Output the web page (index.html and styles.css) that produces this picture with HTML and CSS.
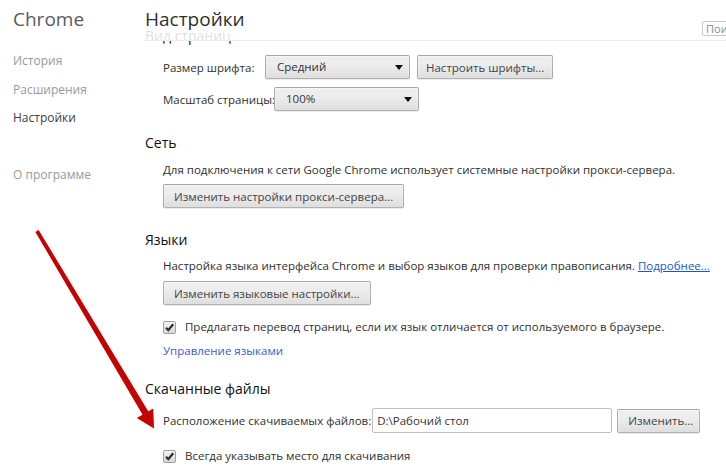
FILE: index.html
```html
<!DOCTYPE html>
<html lang="ru">
<head>
    <meta charset="UTF-8">
    <meta name="viewport" content="width=device-width, initial-scale=1.0">
    <title>Настройки</title>
    <link rel="stylesheet" href="styles.css">
</head>
<body>
    <div class="page">
        <!-- Боковое меню -->
        <nav class="sidebar">
            <div class="brand">Chrome</div>
            <ul class="nav">
                <li>История</li>
                <li>Расширения</li>
                <li class="active">Настройки</li>
                <li class="about">О программе</li>
            </ul>
        </nav>

        <main class="main">
            <header class="topbar">
                <h1>Настройки</h1>
                <input class="search" type="text" placeholder="Поиск настроек">
            </header>

            <!-- Вид страниц -->
            <section class="block block-first">
                <h3>Вид страниц</h3>
                <div class="row row-title">
                    <span class="label label-font">Размер шрифта:</span>
                    <div class="select">Средний<span class="caret"></span></div>
                    <button class="btn btn-fonts">Настроить шрифты...</button>
                </div>
                <div class="row row-next">
                    <span class="label label-zoom">Масштаб страницы:</span>
                    <div class="select">100%<span class="caret"></span></div>
                </div>
            </section>

            <!-- Сеть -->
            <section class="block">
                <h3>Сеть</h3>
                <p class="text">Для подключения к сети Google Chrome использует системные настройки прокси-сервера.</p>
                <div class="row row-btn">
                    <button class="btn">Изменить настройки прокси-сервера...</button>
                </div>
            </section>

            <!-- Языки -->
            <section class="block">
                <h3>Языки</h3>
                <p class="text text-lang">Настройка языка интерфейса Chrome и выбор языков для проверки правописания. <a href="#" class="more">Подробнее...</a></p>
                <div class="row row-btn row-btn-lang">
                    <button class="btn">Изменить языковые настройки...</button>
                </div>
                <label class="check check-translate">
                    <span class="box"><svg viewBox="0 0 13 13" width="13" height="13"><path d="M3 6.8 L5.3 9.2 L10.2 3.2" fill="none" stroke="#2c2c2c" stroke-width="2.2"/></svg></span>
                    Предлагать перевод страниц, если их язык отличается от используемого в браузере.
                </label>
                <p class="text text-link"><a href="#" class="plain-link">Управление языками</a></p>
            </section>

            <!-- Скачанные файлы -->
            <section class="block block-last">
                <h3>Скачанные файлы</h3>
                <div class="row row-path">
                    <span class="label">Расположение скачиваемых файлов:</span>
                    <input class="path" type="text" value="D:\Рабочий стол">
                    <button class="btn btn-change">Изменить...</button>
                </div>
                <label class="check check-ask">
                    <span class="box"><svg viewBox="0 0 13 13" width="13" height="13"><path d="M3 6.8 L5.3 9.2 L10.2 3.2" fill="none" stroke="#2c2c2c" stroke-width="2.2"/></svg></span>
                    Всегда указывать место для скачивания
                </label>
            </section>
        </main>
    </div>

    <!-- Красная стрелка поверх страницы -->
    <svg class="arrow" width="726" height="476" viewBox="0 0 726 476">
        <polygon points="38.6,230 35.4,232 143.2,415.8 148.8,412.2" fill="#c40000"/>
        <polygon points="136.8,418 153.2,408.4 154,428.5" fill="#c40000"/>
    </svg>
</body>
</html>
```

FILE: styles.css
```css
/* Reset */
* {
    box-sizing: border-box;
}

html, body {
    margin: 0;
    padding: 0;
    height: 100%;
    overflow: hidden;
}

body {
    font-family: "Open Sans", "Noto Sans", sans-serif;
    font-size: 11.5px;
    color: #303030;
    background: #fff;
}

.page {
    display: flex;
    width: 726px;
    height: 476px;
    overflow: hidden;
}

/* Боковое меню */
.sidebar {
    width: 145px;
    flex: 0 0 145px;
    padding-left: 13px;
}

.brand {
    margin-top: 7px;
    font-size: 19px;
    line-height: 24px;
    color: #5a5a5a;
}

.nav {
    list-style: none;
    margin: 21px 0 0;
    padding: 0;
}

.nav li {
    height: 28.5px;
    line-height: 18px;
    font-size: 12px;
    color: #999;
}

.nav li.active {
    color: #404040;
}

.nav li.about {
    margin-top: 28.5px;
}

/* Основная часть */
.main {
    flex: 0 0 581px;
    width: 581px;
    min-width: 0;
    position: relative;
    padding-top: 27px;
}

.topbar {
    position: absolute;
    top: 0;
    left: 0;
    width: 581px;
    height: 41px;
    background: rgba(255, 255, 255, 0.86);
    border-bottom: 1px solid #ececec;
    overflow: hidden;
    z-index: 2;
}

.topbar h1 {
    margin: 0;
    padding-top: 7px;
    font-size: 19px;
    line-height: 24px;
    font-weight: normal;
    color: #303030;
}

.search {
    position: absolute;
    top: 21px;
    left: 557px;
    width: 120px;
    height: 15px;
    padding: 0 3px;
    border: 1px solid #c8c8c8;
    border-radius: 2px;
    background: #fff;
    font-family: inherit;
    font-size: 11px;
    line-height: 13px;
    color: #999;
    outline: none;
}

.search::placeholder {
    color: #8a8a8a;
}

h3 {
    margin: 0;
    font-size: 14px;
    line-height: 18px;
    font-weight: normal;
    color: #111;
}

.block {
    margin-top: 23px;
}

.block-first {
    margin-top: 0;
}

.block-last {
    margin-top: 20px;
}

.row {
    display: flex;
    align-items: center;
    height: 24px;
    padding-left: 18px;
}

.row-title {
    margin-top: 10px;
}

.row-next {
    margin-top: 8px;
}

.row-btn {
    margin-top: 5px;
}

.row-btn-lang {
    margin-top: 6px;
}

.row-path {
    margin-top: 10px;
    height: 25px;
}

.label {
    white-space: nowrap;
}

.label-font {
    width: 102px;
}

.label-zoom {
    width: 111px;
}

.text {
    margin: 9px 0 0;
    padding-left: 18px;
    line-height: 18px;
    white-space: nowrap;
}

.text-lang {
    margin-top: 8px;
}

.text-link {
    margin-top: 6px;
}

.more {
    color: #1a55cc;
    text-decoration: underline;
}

.plain-link {
    color: #3a5ad0;
    text-decoration: none;
}

/* Кнопки и поля */
.btn, .select {
    height: 24px;
    padding: 0 10px;
    border: 1px solid rgba(0, 0, 0, 0.25);
    border-radius: 2px;
    background: linear-gradient(#ededed, #ededed 38%, #dedede);
    box-shadow: 0 1px 0 rgba(0, 0, 0, 0.08), inset 0 1px 2px rgba(255, 255, 255, 0.75);
    font-family: inherit;
    font-size: 11.5px;
    color: #444;
    white-space: nowrap;
}

.select {
    position: relative;
    width: 145px;
    padding-left: 11px;
    line-height: 22px;
    color: #333;
}

.caret {
    position: absolute;
    right: 6px;
    top: 9px;
    width: 0;
    height: 0;
    border-left: 4px solid transparent;
    border-right: 4px solid transparent;
    border-top: 5px solid #111;
}

.btn-fonts {
    margin-left: 7px;
    padding: 0 8px;
}

.path {
    width: 240px;
    height: 25px;
    margin-left: 1px;
    padding: 0 4px;
    border: 1px solid #bfbfbf;
    border-radius: 2px;
    font-family: inherit;
    font-size: 11.5px;
    color: #333;
}

.btn-change {
    width: 83px;
    margin-left: 5px;
}

/* Флажки */
.check {
    display: flex;
    align-items: center;
    height: 18px;
    padding-left: 18px;
    line-height: 18px;
    white-space: nowrap;
}

.check-translate {
    margin-top: 13px;
}

.check-ask {
    margin-top: 14px;
}

.box {
    display: block;
    width: 13px;
    height: 13px;
    margin-right: 9px;
    border: 1px solid #a0a0a0;
    border-radius: 2px;
    background: linear-gradient(#f2f2f2, #d8d8d8);
    position: relative;
}

.box svg {
    position: absolute;
    left: -1px;
    top: -1px;
}

/* Стрелка */
.arrow {
    position: absolute;
    left: 0;
    top: 0;
    pointer-events: none;
    z-index: 5;
}
```
